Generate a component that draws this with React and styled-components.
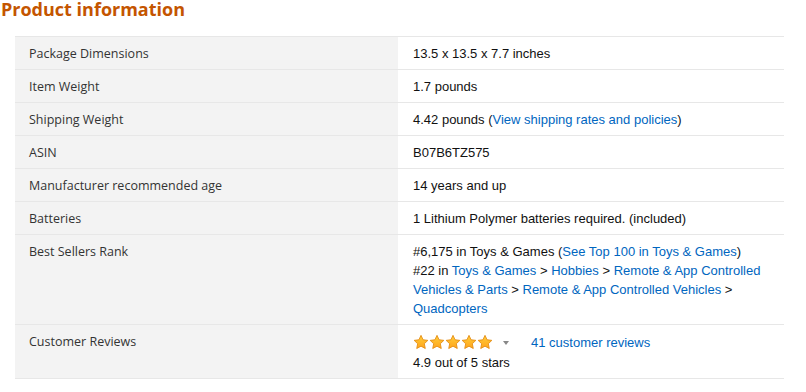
import React from 'react';
import styled, { createGlobalStyle } from 'styled-components';

const GlobalStyle = createGlobalStyle`
  body {
    margin: 0;
    background: #fff;
    font-family: "Liberation Sans", Arial, sans-serif;
  }
`;

const Section = styled.div`
  width: 806px;
  height: 392px;
  overflow: hidden;
`;

const Title = styled.h2`
  margin: 0;
  padding: 0 0 0 1px;
  height: 18px;
  line-height: 18px;
  font-family: "Open Sans", "Liberation Sans", sans-serif;
  font-size: 18px;
  font-weight: 700;
  color: #c45500;
`;

const Table = styled.table`
  margin: 18px 0 0 15px;
  width: 769px;
  border-collapse: collapse;
  border-top: 1px solid #e7e7e7;
`;

const Row = styled.tr`
  border-bottom: 1px solid #e7e7e7;
`;

const Label = styled.th`
  width: 383px;
  box-sizing: border-box;
  background: #f3f3f3;
  padding: 7px 10px 6px 14px;
  text-align: left;
  vertical-align: top;
  font-family: "Open Sans", "Liberation Sans", sans-serif;
  font-size: 12.5px;
  font-weight: 400;
  line-height: 19px;
  color: #333;
`;

const Value = styled.td`
  padding: 7px 10px 6px 15px;
  vertical-align: top;
  font-size: 13px;
  line-height: 19px;
  color: #111;
`;

const Link = styled.a`
  color: #0066c0;
  text-decoration: none;
`;

const RatingLine = styled.div`
  display: flex;
  align-items: center;
  height: 21px;
`;

const Stars = styled.span`
  display: inline-flex;
`;

const Caret = styled.span`
  width: 0;
  height: 0;
  margin: 1px 0 0 10px;
  border-left: 3.5px solid transparent;
  border-right: 3.5px solid transparent;
  border-top: 4px solid #888;
`;

const ReviewLink = styled(Link)`
  margin-left: 22px;
`;

function Star() {
  return (
    <svg width="16" height="17" viewBox="0 0 24 25">
      <defs>
        <linearGradient id="starFill" x1="0" y1="0" x2="0" y2="1">
          <stop offset="0" stopColor="#ffce3a" />
          <stop offset="1" stopColor="#ffa41c" />
        </linearGradient>
      </defs>
      <path
        d="M12 1.8l3.1 6.6 7.2.9-5.3 5 1.4 7.2L12 18l-6.4 3.5 1.4-7.2-5.3-5 7.2-.9z"
        fill="url(#starFill)"
        stroke="#e38b12"
        strokeWidth="1.3"
        strokeLinejoin="round"
      />
    </svg>
  );
}

const rows = [
  ['Package Dimensions', '13.5 x 13.5 x 7.7 inches'],
  ['Item Weight', '1.7 pounds'],
  ['Shipping Weight', <>4.42 pounds (<Link href="#">View shipping rates and policies</Link>)</>],
  ['ASIN', 'B07B6TZ575'],
  ['Manufacturer recommended age', '14 years and up'],
  ['Batteries', '1 Lithium Polymer batteries required. (included)'],
  [
    'Best Sellers Rank',
    <>
      #6,175 in Toys &amp; Games (<Link href="#">See Top 100 in Toys &amp; Games</Link>)
      <br />
      #22 in <Link href="#">Toys &amp; Games</Link> &gt; <Link href="#">Hobbies</Link> &gt;{' '}
      <Link href="#">Remote &amp; App Controlled Vehicles &amp; Parts</Link> &gt;{' '}
      <Link href="#">Remote &amp; App Controlled Vehicles</Link> &gt;{' '}
      <Link href="#">Quadcopters</Link>
    </>,
  ],
  [
    'Customer Reviews',
    <>
      <RatingLine>
        <Stars>
          {[0, 1, 2, 3, 4].map((i) => <Star key={i} />)}
        </Stars>
        <Caret />
        <ReviewLink href="#">41 customer reviews</ReviewLink>
      </RatingLine>
      4.9 out of 5 stars
    </>,
  ],
];

export default function App() {
  return (
    <Section>
      <GlobalStyle />
      <Title>Product information</Title>
      <Table>
        <tbody>
          {rows.map(([label, value]) => (
            <Row key={label}>
              <Label>{label}</Label>
              <Value>{value}</Value>
            </Row>
          ))}
        </tbody>
      </Table>
    </Section>
  );
}
